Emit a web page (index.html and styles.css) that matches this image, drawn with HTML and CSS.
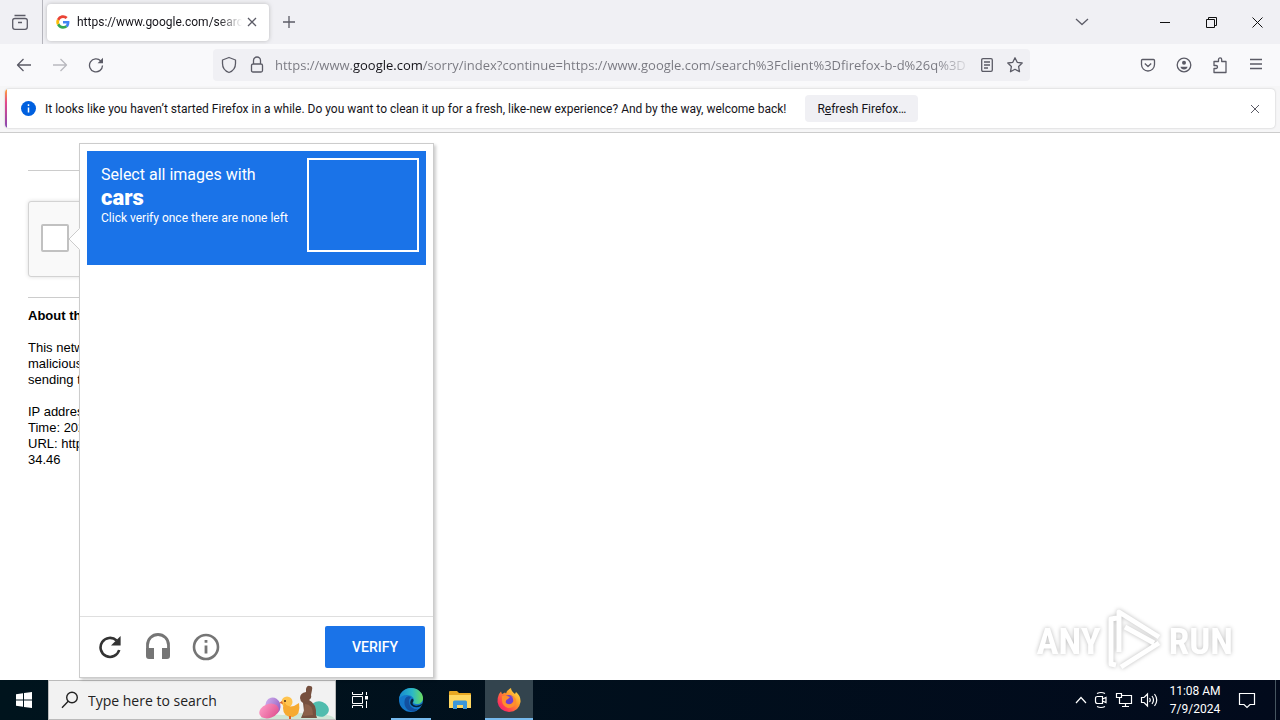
FILE: index.html
```
<!DOCTYPE html>
<html lang="en">
<head>
<meta charset="utf-8">
<title>https://www.google.com/search</title>
<link rel="stylesheet" href="styles.css">
</head>
<body>
<header class="tabs">
  <button class="icon-btn view-btn" aria-label="Firefox View"><svg width="20" height="20" viewBox="0 0 20 20"><path d="M4.500 3.500H15.500M5 6.500H15Q17.300 6.500 17.300 8.500V15Q17.300 17.300 15 17.300H5Q2.700 17.300 2.700 15V8.500Q2.700 6.500 5 6.500ZM8 10.500H12"/></svg></button>
  <div class="tab">
    <svg class="favicon" width="14" height="14" viewBox="0 0 48 48"><path fill="#4285f4" d="M46 24.500c0-1.600-.1-2.700-.4-4H24v8.300h12.600c-.6 3.200-2.300 5.600-5 7.400l7.600 5.900C43.600 38 46 32 46 24.500z"/><path fill="#34a853" d="M24 47c6.500 0 11.500-2 15.200-5.500l-7.600-5.900c-2 1.400-4.500 2.300-7.600 2.300-6 0-11-4-12.600-9.400L3.500 34.500C7.300 42 15 47 24 47z"/><path fill="#fbbc05" d="M11.400 28.500a14 14 0 0 1 0-9L3.500 13.500a23 23 0 0 0 0 21z"/><path fill="#ea4335" d="M24 10.100c3.600 0 6.700 1.300 9.100 3.600l6.800-6.700A23 23 0 0 0 3.500 13.500l7.900 6C13 14.100 18 10.100 24 10.100z"/></svg>
    <span class="tab-title">https://www.google.com/searc</span>
    <button class="icon-btn tab-close" aria-label="Close tab"><svg width="10" height="10" viewBox="0 0 10 10"><path d="M1 1 9 9M9 1 1 9"/></svg></button>
  </div>
  <button class="icon-btn new-tab" aria-label="New tab"><svg width="14" height="14" viewBox="0 0 14 14"><path d="M7 1V13M1 7H13"/></svg></button>
  <div class="window-controls">
    <button class="icon-btn list-tabs" aria-label="List all tabs"><svg width="14" height="8" viewBox="0 0 14 8"><path d="M1 1 7 6.500 13 1"/></svg></button>
    <button class="icon-btn dark" aria-label="Minimize"><svg width="10" height="10" viewBox="0 0 10 10"><path d="M0 5.500H10"/></svg></button>
    <button class="icon-btn dark" aria-label="Restore"><svg width="11" height="11" viewBox="0 0 11 11"><path d="M.5 2.500H8.500V10.500H.5ZM2.500 2.500V.5H10.500V8.500H8.500"/></svg></button>
    <button class="icon-btn dark" aria-label="Close"><svg width="11" height="11" viewBox="0 0 11 11"><path d="M.5.5 10.500 10.500M10.500.5.5 10.500"/></svg></button>
  </div>
</header>
<nav class="toolbar">
  <div class="nav-buttons">
    <button class="icon-btn" aria-label="Back"><svg width="16" height="16" viewBox="0 0 16 16"><path d="M15 8H1.500M7.500 2 1.500 8l6 6"/></svg></button>
    <button class="icon-btn faded" aria-label="Forward"><svg width="16" height="16" viewBox="0 0 16 16"><path d="M1 8H14.500M8.500 2l6 6-6 6"/></svg></button>
    <button class="icon-btn" aria-label="Reload"><svg width="16" height="16" viewBox="0 0 16 16"><path d="M14.500 8.500A6.500 6.500 0 1 1 12.800 4"/><path class="solid" d="M15 .8V6.200H9.600Z"/></svg></button>
  </div>
  <div class="urlbar">
    <button class="icon-btn" aria-label="Tracking protection"><svg width="16" height="18" viewBox="0 0 16 18"><path d="M8 1.500 14.500 4V7.500C14.500 11.500 12 15 8 16.500 4 15 1.500 11.500 1.500 7.500V4Z"/></svg></button>
    <button class="icon-btn" aria-label="Site information"><svg width="14" height="18" viewBox="0 0 14 18"><path d="M3.500 8V4.500a3.500 3.500 0 0 1 7 0V8M3 8H11Q12.500 8 12.500 9.500V14.500Q12.500 16 11 16H3Q1.500 16 1.500 14.500V9.500Q1.500 8 3 8Z"/></svg></button>
    <input class="url" type="text" aria-label="Address" value="https://www.google.com/sorry/index?continue=https://www.google.com/search%3Fclient%3Dfirefox-b-d%26q%3D">
    <button class="icon-btn" aria-label="Reader view"><svg width="14" height="16" viewBox="0 0 14 16"><path d="M3 1.700H11Q12.300 1.700 12.300 3V13Q12.300 14.300 11 14.300H3Q1.700 14.300 1.700 13V3Q1.700 1.700 3 1.700ZM4 5H10M4 8H10M4 11H8"/></svg></button>
    <button class="icon-btn" aria-label="Bookmark"><svg width="18" height="18" viewBox="0 0 18 18"><path d="M9 1.800 11.200 6.300 16.200 7 12.600 10.500 13.500 15.700 9 13.300 4.500 15.700 5.400 10.500 1.800 7 6.800 6.300Z"/></svg></button>
  </div>
  <div class="tools">
    <button class="icon-btn" aria-label="Pocket"><svg width="16" height="16" viewBox="0 0 16 16"><path d="M2.500 2.500H13.500Q14.500 2.500 14.500 3.500V7.500A6.500 6.500 0 0 1 1.500 7.500V3.500Q1.500 2.500 2.500 2.500ZM4.800 6.500 8 9.500 11.200 6.500"/></svg></button>
    <button class="icon-btn" aria-label="Account"><svg width="16" height="16" viewBox="0 0 16 16"><circle cx="8" cy="8" r="6.800"/><circle class="solid" cx="8" cy="5.800" r="2"/><path class="solid" d="M4.500 9.800H11.500Q11 12.400 8 12.400 5 12.400 4.500 9.800Z"/></svg></button>
    <button class="icon-btn" aria-label="Extensions"><svg width="16" height="18" viewBox="0 0 16 18"><path d="M2 16.500V12.500H4A1.500 1.500 0 0 0 4 9.500H2V5.500H6.500V3.500A1.600 1.600 0 0 1 9.700 3.500V5.500H14V16.500Z"/></svg></button>
    <button class="icon-btn" aria-label="Menu"><svg width="14" height="14" viewBox="0 0 14 14"><path d="M1 1.500H13M1 6H13M1 10.500H13"/></svg></button>
  </div>
</nav>
<section class="notice-area">
  <div class="notice">
    <svg width="15" height="15" viewBox="0 0 15 15"><circle cx="7.500" cy="7.500" r="7.500" fill="#0060df"/><path d="M7.500 3.200V4.900M7.500 6.500V11.500" stroke="#fff" stroke-width="1.500"/></svg>
    <span class="notice-text">It looks like you haven’t started Firefox in a while. Do you want to clean it up for a fresh, like-new experience? And by the way, welcome back!</span>
    <button class="refresh">R<u>e</u>fresh Firefox…</button>
    <button class="icon-btn notice-close" aria-label="Dismiss"><svg width="10" height="10" viewBox="0 0 10 10"><path d="M1 1 9 9M9 1 1 9"/></svg></button>
  </div>
</section>
<main class="page">
  <div class="sorry">
    <hr>
    <div class="anchor"><input type="checkbox" class="robot" aria-label="Verification"></div>
    <hr>
    <p><b>About this</b></p>
    <p>This network<br>malicious<br>sending the</p>
    <p>IP address<br>Time: 2024<br>URL: https<br>34.46</p>
  </div>
  <section class="challenge">
    <svg class="pointer" width="12" height="22" viewBox="0 0 12 22"><path d="M12 0 1 11 12 22Z" fill="#fff"/><path d="M11.500.5 1 11 11.500 21.500" fill="none" stroke="#ccc"/></svg>
    <div class="prompt">
      <div class="prompt-text">
        <div class="line">Select all images with</div>
        <strong>cars</strong>
        <div class="hint">Click verify once there are none left</div>
      </div>
      <div class="sample"></div>
    </div>
    <div class="grid-space"></div>
    <div class="challenge-footer">
      <button class="round" aria-label="Get a new challenge"><svg width="24" height="24" viewBox="0 0 24 24"><path d="M21.200 15A9.500 9.500 0 1 1 18.600 5.500" fill="none" stroke="#333" stroke-width="2.600"/><path d="M22.600 1V10.500H13Z" fill="#333"/></svg></button>
      <button class="round" aria-label="Audio challenge"><svg width="24" height="28" viewBox="0 0 24 28"><path d="M1.500 16V12A10.500 10.500 0 0 1 22.500 12V16" fill="none" stroke="#757575" stroke-width="2.800"/><path d="M0 15H8V26H3Q0 26 0 23ZM16 15H24V23Q24 26 21 26H16Z" fill="#757575"/></svg></button>
      <button class="round" aria-label="Help"><svg width="28" height="28" viewBox="0 0 28 28"><circle cx="14" cy="14" r="12" fill="none" stroke="#757575" stroke-width="2.600"/><path d="M14 7V9.800M14 12.500V20.500" stroke="#757575" stroke-width="2.800"/></svg></button>
      <button class="verify">VERIFY</button>
    </div>
  </section>
  <div class="watermark">
    <span>ANY</span>
    <svg width="60" height="64" viewBox="0 0 60 64"><g fill="none" stroke="#fff" stroke-width="5" stroke-linejoin="round"><path d="M12 9 6 10V55L11 56M14 43V3L54 28M20 18 49 34M54 34 16 58"/></g></svg>
    <span>RUN</span>
  </div>
</main>
<footer class="taskbar">
  <button class="task start" aria-label="Start"><svg width="16" height="16" viewBox="0 0 16 16"><path d="M0 2.300 7 1.300V7.500H0ZM8 1.100 16 0V7.500H8ZM0 8.500H7V14.700L0 13.700ZM8 8.500H16V16L8 14.900Z" fill="#fff"/></svg></button>
  <label class="search">
    <svg width="18" height="18" viewBox="0 0 18 18"><circle cx="11" cy="6.500" r="5.300" fill="none" stroke="#222" stroke-width="1.400"/><path d="M7.200 10.300 1 16.700" stroke="#222" stroke-width="1.400"/></svg>
    <input type="text" placeholder="Type here to search" aria-label="Type here to search">
    <svg width="76" height="38" viewBox="0 0 76 38"><defs><linearGradient id="egg" y2="1"><stop stop-color="#d5b5f0"/><stop offset="1" stop-color="#8c55be"/></linearGradient><linearGradient id="pink" y2="1"><stop stop-color="#ff9fc8"/><stop offset="1" stop-color="#dd4c8c"/></linearGradient></defs><path d="M0 38Q8 32 24 34 45 30 60 34 72 33 76 38Z" fill="#cfe5d6"/><ellipse cx="14" cy="25" rx="7.500" ry="8.500" transform="rotate(-15 14 25)" fill="url(#egg)"/><ellipse cx="10" cy="30" rx="10" ry="7" transform="rotate(-20 10 30)" fill="url(#pink)"/><ellipse cx="61" cy="28" rx="9" ry="7.500" transform="rotate(20 61 28)" fill="#50bcae"/><circle cx="28" cy="21" r="5.500" fill="#ffc44f"/><path d="M25 20Q27 27 35 25L40 22Q42 34 34 36 24 36 24 27Z" fill="#f6aa31"/><path d="M23 20 20 22 24 23Z" fill="#df642b"/><circle cx="26" cy="20" r="1" fill="#4b2914"/><path d="M31 35V38" stroke="#df642b" stroke-width="2"/><path d="M41 17Q41 12 47 11L47 8Q48 4 51 5 54 5 53 9L52 14Q53 17 50 19 58 23 57 34L58 37H42L45 30 44 22Q41 20 41 17Z" fill="#76503f"/><path d="M46 23Q54 23 54 34L44 35Z" fill="#8c604a"/></svg>
  </label>
  <button class="task" aria-label="Task View"><svg width="18" height="18" viewBox="0 0 18 18"><path d="M1.500 1V3.500H11.500V1M1.500 17V14.500H11.500V17M1.500 5.500H11.500V12.500H1.500ZM15.500 1V4M15.500 10V17" fill="none" stroke="#fff"/><path d="M14 5H17V8.500H14Z" fill="#fff"/></svg></button>
  <button class="task open" aria-label="Microsoft Edge"><svg width="24" height="24" viewBox="0 0 24 24"><defs><linearGradient id="ed"><stop stop-color="#1688cf"/><stop offset=".55" stop-color="#2bb8c7"/><stop offset="1" stop-color="#6bdc5c"/></linearGradient></defs><circle cx="12" cy="12" r="12" fill="#1477ca"/><path d="M0 11C1 4 6 0 12 0 19 0 24 5 24 10 24 14 21 16 18 16 15 16 13.500 15 14.500 13 16 10 12 7 8 7 4 7 1 9 0 11Z" fill="url(#ed)"/><path d="M6 11Q4 18 9 22 14 25 19 21.500 10 21 10 13 10 11 12 9 8 7 6 11Z" fill="#1250a0"/><path d="M14.500 13Q12 16 16 17.500 20 18.500 24 15L22 18Q16 21 12 17 10 14 13 10.500 15 11 14.500 13Z" fill="#062238"/></svg></button>
  <button class="task" aria-label="File Explorer"><svg width="22" height="20" viewBox="0 0 22 20"><path d="M0 2Q0 1 1 1H8L10 3H21Q22 3 22 4V18H0Z" fill="#e8a823"/><path d="M0 5H22V18H0Z" fill="#ffd761"/><path d="M4 19V12Q4 10.500 5.500 10.500H16.500Q18 10.500 18 12V19H14V15H8V19Z" fill="#3c97da"/></svg></button>
  <button class="task open active" aria-label="Firefox"><svg width="24" height="24" viewBox="0 0 24 24"><defs><linearGradient id="ff" x1="1" x2="0" y2="1"><stop stop-color="#fff44f"/><stop offset=".4" stop-color="#ff9a28"/><stop offset=".75" stop-color="#ff3a56"/><stop offset="1" stop-color="#e31587"/></linearGradient></defs><path d="M2 6 4 3.500 5 6 8 4.500 9 5.500Q10 2 14 0 14 3 18 6L19 4Q24 8 23.500 14 22 23.500 12 24 2 23 .5 14 .5 9 2 6Z" fill="url(#ff)"/><circle cx="12" cy="13" r="6" fill="#7140d1"/><path d="M5 8Q9 7 13 9L11 11Q8 12 9 15 13 18 16 14 17 10 14 8 20 9 19 15 17 20 11 20 5 18 5 12Z" fill="#ff8e2c"/></svg></button>
  <div class="tray">
    <svg width="12" height="8" viewBox="0 0 12 8"><path d="M1 7 6 1.500 11 7"/></svg>
    <svg width="14" height="18" viewBox="0 0 14 18"><path d="M3 2.500Q7 .5 11 2.500M3 15.500Q7 17.500 11 15.500M3.500 5.500H8.500V12.500H3.500Q1.500 12.500 1.500 10.500V7.500Q1.500 5.500 3.500 5.500ZM8.500 8 12 6.500V11.500L8.500 10"/></svg>
    <svg width="18" height="16" viewBox="0 0 18 16"><path d="M7 3.500H16.500V11.500H4.500V8M10.500 11.500V14.500M7 14.500H14M1.500 1.500H6.500V5.500H1.500ZM4.500 5.500V8"/></svg>
    <svg width="18" height="16" viewBox="0 0 18 16"><path d="M1.500 5.500H4L7.500 2V14L4 10.500H1.500ZM9.500 6Q11 8 9.500 10M12 4Q15 8 12 12M14.500 2Q19 8 14.500 14"/></svg>
    <div class="clock"><span>11:08 AM</span><span>7/9/2024</span></div>
    <svg class="messages" width="18" height="17" viewBox="0 0 18 17"><path d="M1.500 1.500H16.500V12.500H12L9 15.500 6 12.500H1.500Z"/></svg>
  </div>
</footer>
</body>
</html>
```
FILE: styles.css
```
* { box-sizing: border-box; }
body {
  margin: 0;
  height: 100vh;
  display: flex;
  flex-direction: column;
  background: #fff;
  color: #15141a;
  font: 12px Roboto, "Open Sans", sans-serif;
  overflow: hidden;
}
button, input { font: inherit; color: inherit; border: 0; padding: 0; margin: 0; background: none; }
svg { display: block; flex: none; }
.icon-btn { display: flex; align-items: center; justify-content: center; width: 36px; height: 32px; flex: none; }
.icon-btn svg { fill: none; stroke: #5b5b66; stroke-width: 1.3; stroke-linejoin: round; }
.icon-btn .solid { fill: #5b5b66; stroke: none; }
.icon-btn.dark { width: 46px; }
.icon-btn.dark svg { stroke: #111; stroke-width: 1; stroke-linejoin: miter; }
.faded { opacity: .4; }

.tabs { display: flex; align-items: center; height: 44px; flex: none; background: #f0f0f4; }
.view-btn { width: 43px; height: 44px; padding-right: 3px; border-right: 1px solid #b5b5bc; }
.tab { display: flex; align-items: center; width: 222px; height: 37px; margin-left: 4px; padding: 0 7px 0 9px; background: #fff; border-radius: 4px; box-shadow: 0 0 4px #8888; }
.favicon { margin-right: 7px; }
.tab-title { flex: 1; overflow: hidden; white-space: nowrap; mask-image: linear-gradient(to left, transparent, #000 24px); }
.tab-close { width: 20px; }
.new-tab { margin-left: 2px; }
.window-controls { display: flex; margin-left: auto; }
.list-tabs { margin-right: 42px; }

.toolbar { display: flex; align-items: center; height: 42px; flex: none; padding: 0 6px; background: #f9f9fb; }
.nav-buttons, .tools { display: flex; flex: 1 0 0; }
.tools { justify-content: flex-end; flex-basis: 37px; }
.urlbar { display: flex; align-items: center; flex: 0 1 817px; min-width: 0; height: 32px; padding: 0 1px 0 2px; background: #f0f0f4; border-radius: 4px; }
.urlbar .icon-btn { width: 28px; }
.url {
  flex: 1;
  min-width: 0;
  height: 32px;
  margin: 0 1px 0 4px;
  font: 13px "Open Sans", sans-serif;
  outline: 0;
  color: transparent;
  background: linear-gradient(to right, #77777f 77px, #15141a 77px 148px, #77777f 148px);
  background-clip: text;
  mask-image: linear-gradient(to left, transparent, #000 36px);
}

.notice-area { flex: none; height: 47px; padding: 3px 5px 5px; background: #f6f6f7; border-bottom: 1px solid #ccc; }
.notice { position: relative; display: flex; align-items: center; height: 39px; padding: 0 2px 0 16px; background: #fff; border-radius: 4px; box-shadow: 0 0 2px #bbb; overflow: hidden; }
.notice::before { content: ""; position: absolute; left: 0; top: 0; width: 2px; height: 100%; background: linear-gradient(#ffa436, #e2488c 35%, #8548b0); }
.notice-text { margin: 0 19px 0 9px; white-space: nowrap; }
.refresh { height: 27px; padding: 0 12px; background: #f0f0f4; border-radius: 4px; white-space: nowrap; }
.notice-close { margin-left: auto; }
.notice-close svg { stroke-width: 1; }

.page { position: relative; flex: 1; min-height: 0; padding: 37px 28px 0; }
.sorry { max-width: 400px; font: 13px/16px "Liberation Sans", Arial, sans-serif; color: #000; white-space: nowrap; }
.sorry hr { height: 1px; margin: 0; border: 0; background: #ccc; }
.sorry p { margin: 0 0 16px; }
.sorry hr + p { margin-top: 10px; }
.anchor { display: flex; align-items: center; width: 304px; height: 76px; margin: 30px 0 20px; padding: 0 0 2px 12px; background: #f9f9f9; border: 1px solid #d3d3d3; border-radius: 3px; box-shadow: 0 0 4px #ddd; }
.robot { appearance: none; width: 28px; height: 28px; border: 2px solid #c1c1c1; border-radius: 2px; background: #fff; }

.challenge { position: absolute; left: 79px; top: 10px; bottom: 2px; width: 355px; display: flex; flex-direction: column; background: #fff; border: 1px solid #ccc; box-shadow: 2px 2px 3px #0003; font-family: Roboto, sans-serif; }
.pointer { position: absolute; left: -12px; top: 84px; }
.prompt { display: flex; justify-content: space-between; height: 114px; margin: 7px; padding: 7px 7px 0 14px; background: #1a73e8; color: #fff; }
.prompt-text { display: flex; flex-direction: column; padding-top: 7px; font-size: 12px; line-height: 14px; }
.line { font-size: 16px; line-height: 20px; }
.prompt strong { font-size: 22px; line-height: 26px; font-weight: 900; }
.sample { width: 112px; height: 94px; border: 2px solid #fff; }
.grid-space { flex: 1; }
.challenge-footer { display: flex; align-items: center; height: 61px; padding: 0 8px 0 6px; border-top: 1px solid #dfdfdf; }
.round { display: flex; align-items: center; justify-content: center; width: 48px; height: 48px; }
.verify { width: 100px; height: 42px; margin-left: auto; background: #1a73e8; color: #fff; border-radius: 2px; font-size: 14px; font-weight: 500; }

.watermark { position: absolute; right: 47px; bottom: 7px; display: flex; align-items: center; gap: 4px; color: #fff; font: bold 37px "Liberation Sans Narrow", "Roboto Condensed", "DejaVu Sans Condensed", sans-serif; filter: drop-shadow(0 0 2px #bbb); }

.taskbar { display: flex; flex: none; height: 40px; background: linear-gradient(to right, #00141d, #020a1c); color: #fff; }
.task { display: flex; align-items: center; justify-content: center; width: 48px; flex: none; }
.open { border-bottom: 2px solid #76b9ed; padding-top: 2px; }
.open:not(.active) { width: 40px; margin: 0 5px 0 7px; }
.active { background: #33444e; margin-left: 1px; }
.search { display: flex; align-items: center; width: 288px; padding-left: 12px; background: #f2f2f2; border: 1px solid #bbb; color: #222; }
.search input { flex: 1; min-width: 0; margin-left: 9px; font: 14px "Open Sans", sans-serif; outline: 0; }
.search input::placeholder { color: #222; opacity: 1; }
.tray { display: flex; align-items: center; gap: 7px; margin-left: auto; margin-right: 4px; padding-right: 19px; border-right: 1px solid #465560; }
.tray svg { fill: none; stroke: #fff; stroke-width: 1.2; }
.clock { display: flex; flex-direction: column; align-items: center; width: 60px; line-height: 18px; white-space: nowrap; }
.messages { margin-left: 6px; }
```
